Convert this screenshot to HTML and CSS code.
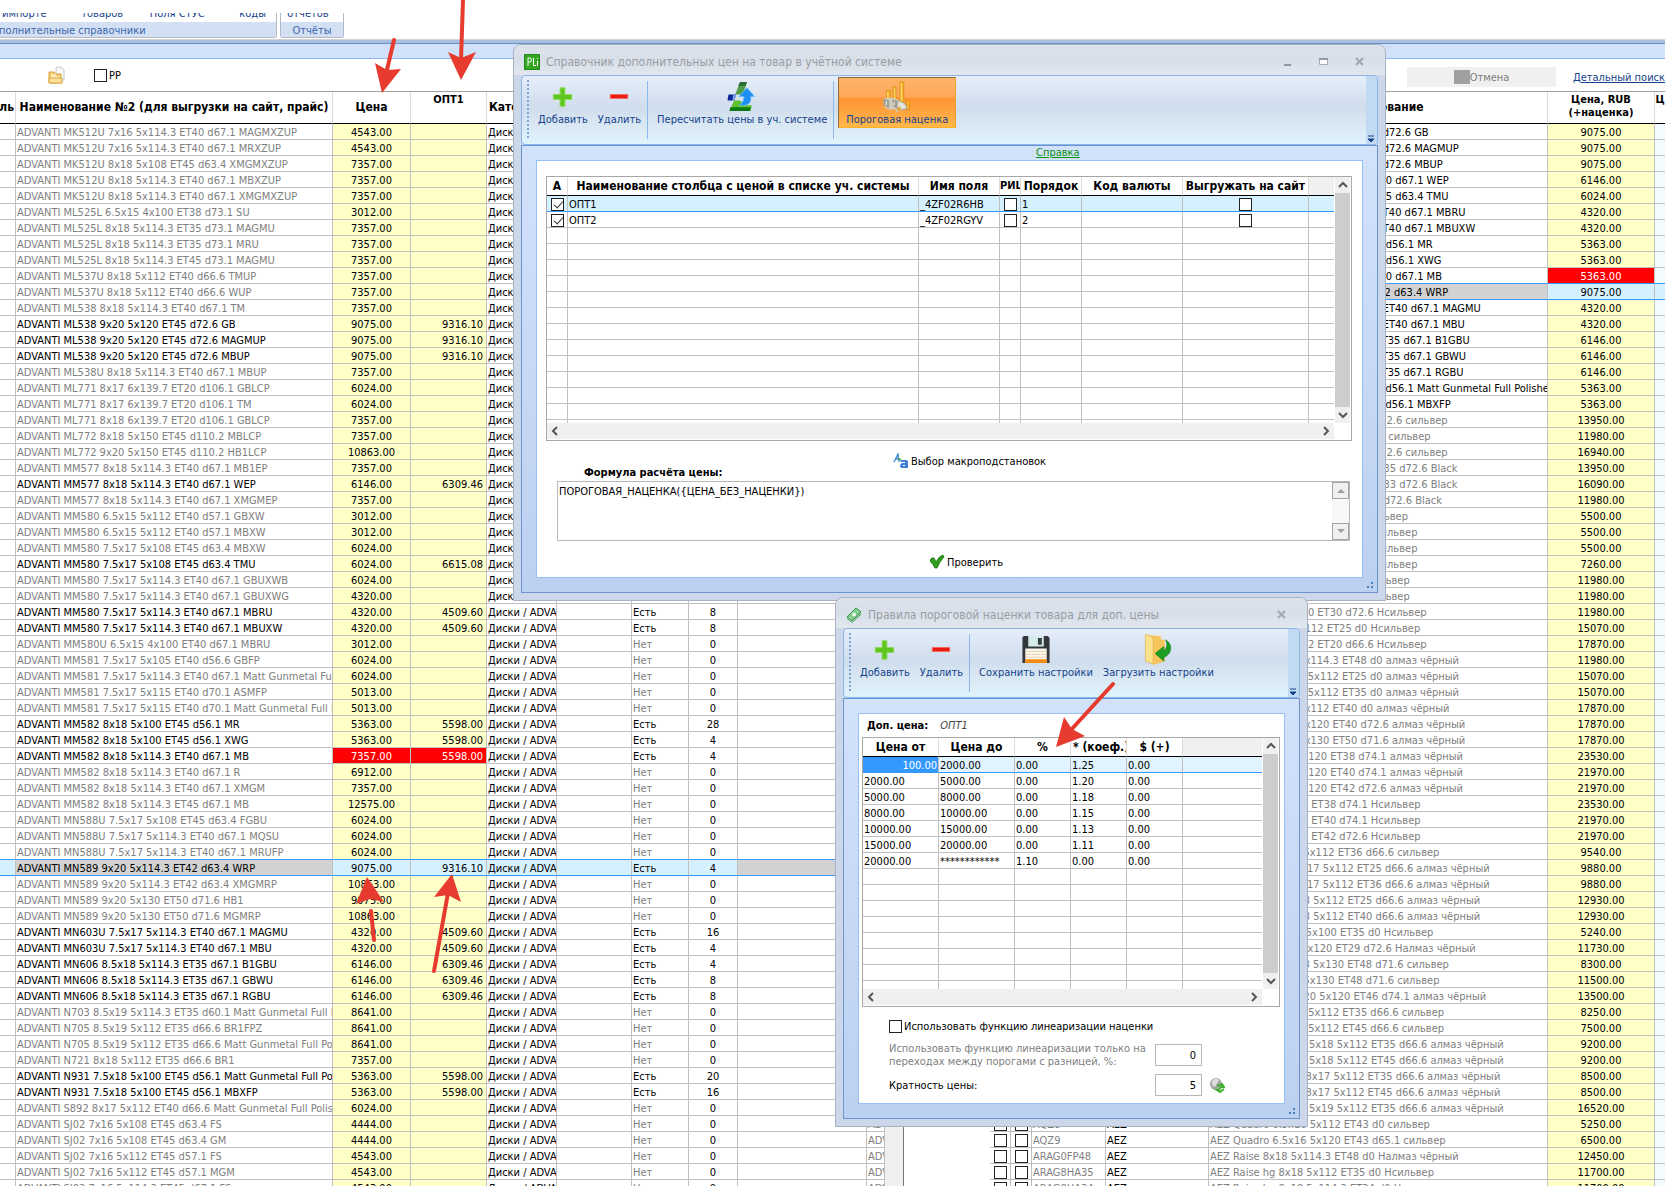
FILE: index.html
```html
<!DOCTYPE html>
<html lang="ru">
<head>
<meta charset="utf-8">
<title>Справочник дополнительных цен</title>
<link rel="stylesheet" href="styles.css">
</head>
<body>
<header class="ribbon">
  <section class="ribbon-group ribbon-group-main">
    <div class="ribbon-items">
      <button type="button">импорте ˅</button>
      <button type="button">товаров</button>
      <button type="button">Поля СТУС ˅</button>
      <button type="button">коды</button>
    </div>
    <h2>полнительные справочники</h2>
  </section>
  <section class="ribbon-group ribbon-group-reports">
    <div class="ribbon-items"><button type="button">отчётов ˅</button></div>
    <h2>Отчёты</h2>
  </section>
</header>
<div class="band"></div>
<div class="filters">
  <button type="button" class="icon-btn" aria-label="Открыть">
    <svg width="17" height="18" viewBox="0 0 17 18"><path d="M9 1h4l3 3v10H8V2z" fill="#f6f6f6" stroke="#c8c8c8"/><path d="M1 6h5l1 2h6v9H1z" fill="#f6cf6e" stroke="#d9a33a"/><path d="M3 11h9M3 9h5" stroke="#fff"/><path d="M1 17v-5h13v5z" fill="#fde39a" stroke="#d9a33a"/></svg>
  </button>
  <label class="pp"><input type="checkbox" class="box">PP</label>
  <button type="button" class="cancel" disabled><span class="stop"></span>Отмена</button>
  <a href="#" class="detail">Детальный поиск</a>
</div>
<main class="panes">
  <div class="pane-left">
    <table class="sheet left">
      <colgroup><col class="w16"><col class="w317"><col class="w78"><col class="w76"><col class="w70"><col class="w75"><col class="w57"><col class="w49"><col class="w129"><col class="w18"></colgroup>
      <thead><tr><th class="clip-left">ль</th><th>Наименование №2 (для выгрузки на сайт, прайс)</th><th>Цена</th><th class="top">ОПТ1</th><th class="start">Категория</th><th></th><th></th><th></th><th></th><th></th></tr></thead>
      <tbody id="left-rows"></tbody>
    </table>
    <div class="vbar"></div>
  </div>
  <div class="pane-right">
    <table class="sheet right">
      <colgroup><col class="w21"><col class="w21"><col class="w74"><col class="w103"><col><col class="w107"><col class="w10"></colgroup>
      <thead><tr><th></th><th></th><th></th><th></th><th>Наименование</th><th class="top">Цена, RUB<br>(+наценка)</th><th class="top">Ц</th></tr></thead>
      <tbody id="right-rows"></tbody>
    </table>
  </div>
</main>

<section class="window win-prices">
  <div class="titlebar">
    <svg width="16" height="16" viewBox="0 0 16 16"><rect width="16" height="16" fill="#1f8a1a"/><rect x="1" y="1" width="14" height="14" fill="#35a522"/><path d="M4 12V4h2q1.500 0 1.500 2T6 8H4M9.500 4v7.500H12M13.500 7v5M13.500 4v1" fill="none" stroke="#fff"/></svg>
    <h1>Справочник дополнительных цен на товар в учётной системе</h1>
    <button type="button" aria-label="Свернуть"><svg width="12" height="12" viewBox="0 0 12 12"><path d="M2 9h7" stroke="#8e99a8" stroke-width="2"/></svg></button>
    <button type="button" aria-label="Развернуть"><svg width="12" height="12" viewBox="0 0 12 12"><path d="M1.500 3h8v5.500h-8z" fill="#fff" stroke="#a3abb8"/><path d="M1 3h9" stroke="#8e99a8" stroke-width="2"/></svg></button>
    <button type="button" aria-label="Закрыть"><svg width="12" height="12" viewBox="0 0 12 12"><path d="M2 2l7 7M9 2l-7 7" stroke="#9ea8b8" stroke-width="2"/></svg></button>
  </div>
  <div class="toolbar">
    <span class="grip"></span>
    <button type="button" class="tool"><svg width="32" height="32" viewBox="0 0 32 32"><path d="M13 7h5v7h7v5h-7v7h-5v-7H6v-5h7z" fill="#5fc51f" stroke="#8ddb5a"/></svg>Добавить</button>
    <button type="button" class="tool"><svg width="32" height="32" viewBox="0 0 32 32"><path d="M7 14h18v4H7z" fill="#ea1a12" stroke="#f5685c"/></svg>Удалить</button>
    <span class="sep"></span>
    <button type="button" class="tool"><svg width="32" height="32" viewBox="0 0 32 32"><path d="M14 1h7l-4 13H9z" fill="#4f9d4a"/><path d="M14 1h7l-1 4h-8z" fill="#2d6b34"/><path d="M2 14h8l-2 6H1z" fill="#0c2a9c"/><path d="M7 14h3l-2 6H6z" fill="#7fa0ea"/><path d="M8 20h6l5 5h7l-1 6H3z" fill="#5fc22c"/><path d="M4 27h21l-1 4H3z" fill="#0d7a14"/><path d="M21 7l8 9h-4q1 7-5 9h-7q5-3 5-9h-5z" fill="#1e90f5" stroke="#66bcff" stroke-width=".8"/></svg>Пересчитать цены в уч. системе</button>
    <span class="sep"></span>
    <button type="button" class="tool active" aria-pressed="true"><svg width="32" height="32" viewBox="0 0 32 32"><g fill="#f8b62c" stroke="#d98a0e" stroke-width=".8"><path d="M5 10h4v10H5zM12 6h3v14h-3zM19 1h4v27h-4zM26 20h3v10h-3z"/></g><g fill="#fbe08a"><path d="M6 11h1v8H6zM13 7h1v12h-1zM20 2h1v18h-1z"/></g><path d="M2 18l7-1 8 2 8 6v4l-9 3-3-3-4 1-6-3z" fill="#cfccbd"/><path d="M2 18l6 2v8l-6-3zM11 19l5 1v9l-4-3z" fill="#a3a195"/><path d="M17 20l7 3 3 5-7 2-4-4z" fill="#dedbd0" stroke="#86847a" stroke-width=".6"/><path d="M5 21v4M13 22v3M19 23l4 4" stroke="#fff"/><circle cx="18" cy="29" r="2" fill="#e9a51c"/></svg>Пороговая наценка</button>
    <span class="more"><svg width="10" height="10" viewBox="0 0 10 10"><path d="M2 2h6M2 5h6L5 8z" fill="#15428b" stroke="#15428b"/></svg></span>
  </div>
  <div class="client">
    <a href="#" class="help">Справка</a>
    <div class="panel">
      <div class="grid">
        <div class="grid-view">
          <table class="sheet">
            <colgroup><col class="w21"><col><col class="w81"><col class="w21"><col class="w61"><col class="w101"><col class="w126"><col class="w25"></colgroup>
            <thead><tr><th>A</th><th>Наименование столбца с ценой в списке уч. системы</th><th>Имя поля</th><th class="small">РИЦ</th><th>Порядок</th><th>Код валюты</th><th>Выгружать на сайт</th><th class="blank"></th></tr></thead>
            <tbody id="price-rows"></tbody>
          </table>
        </div>
        <div class="vscroll"><svg viewBox="0 0 16 16"><path d="M4 10l4-4 4 4" /></svg><i></i><svg viewBox="0 0 16 16"><path d="M4 6l4 4 4-4"/></svg></div>
        <div class="hscroll"><svg viewBox="0 0 16 16"><path d="M10 4L6 8l4 4"/></svg><svg viewBox="0 0 16 16"><path d="M6 4l4 4-4 4"/></svg></div>
      </div>
      <div class="formula-head">
        <label for="formula">Формула расчёта цены:</label>
        <button type="button" class="link-btn"><svg width="16" height="16" viewBox="0 0 16 16"><path d="M1 9L5 1l1 8M2 6h4" fill="none" stroke="#4a8fe0" stroke-width="1.500"/><path d="M5 5l4 3" stroke="#3aa03a" stroke-width="1.500"/><path d="M8 7h5q2 0 2 2v6H9q-2 0-2-2t2-3h3V9H8z" fill="#3f7fd6"/><path d="M10 12h2v1h-2z" fill="#fff"/></svg>Выбор макроподстановок</button>
      </div>
      <div class="formula-box">
        <textarea id="formula">ПОРОГОВАЯ_НАЦЕНКА({ЦЕНА_БЕЗ_НАЦЕНКИ})</textarea>
        <div class="spin"><button type="button" aria-label="Вверх"><svg width="8" height="5" viewBox="0 0 8 5"><path d="M0 5l4-4 4 4z"/></svg></button><button type="button" aria-label="Вниз"><svg width="8" height="5" viewBox="0 0 8 5"><path d="M0 0l4 4 4-4z"/></svg></button></div>
      </div>
      <div class="check"><button type="button" class="link-btn"><svg width="16" height="16" viewBox="0 0 16 16"><path d="M1 7q1-4 4-3l2 4q3-6 7-7l1 2q-4 4-7 11H6Q4 10 1 7z" fill="#2f9e1c" stroke="#1c6f12" stroke-width=".8"/></svg>Проверить</button></div>
    </div>
    <svg class="resize" width="6" height="6" viewBox="0 0 6 6"><path d="M4 0h2v2H4zM4 4h2v2H4zM0 4h2v2H0z" fill="#4a7ebb"/></svg>
  </div>
</section>

<section class="window win-rules">
  <div class="titlebar">
    <svg width="16" height="16" viewBox="0 0 16 16"><path d="M1 10L10 1l5 4-9 9z" fill="#7cc98a" stroke="#3f9a55"/><path d="M1 11l5 4 9-9v2l-9 8-5-4z" fill="#5aad6a"/><circle cx="8" cy="7.500" r="2" fill="#e9f8ea"/><path d="M4 10l1 1M11 4l1 1" stroke="#e9f8ea"/></svg>
    <h1>Правила пороговой наценки товара для доп. цены</h1>
    <button type="button" aria-label="Закрыть"><svg width="12" height="12" viewBox="0 0 12 12"><path d="M2 2l7 7M9 2l-7 7" stroke="#9ea8b8" stroke-width="2"/></svg></button>
  </div>
  <div class="toolbar">
    <span class="grip"></span>
    <button type="button" class="tool"><svg width="32" height="32" viewBox="0 0 32 32"><path d="M13 7h5v7h7v5h-7v7h-5v-7H6v-5h7z" fill="#5fc51f" stroke="#8ddb5a"/></svg>Добавить</button>
    <button type="button" class="tool"><svg width="32" height="32" viewBox="0 0 32 32"><path d="M7 14h18v4H7z" fill="#ea1a12" stroke="#f5685c"/></svg>Удалить</button>
    <span class="sep"></span>
    <button type="button" class="tool"><svg width="32" height="32" viewBox="0 0 32 32"><path d="M2 4q0-2 2-2h24l2 2v26H2z" fill="#33363b"/><path d="M8 2h16v11H8z" fill="#d5ebe9"/><path d="M18 4h4v7h-4z" fill="#3a3d42"/><path d="M5 15h22v15H5z" fill="#fdf8ef"/><path d="M5 18h22M5 21h22M5 24h22" stroke="#e3cfae"/><path d="M5 26h22v4H5z" fill="#f78a10"/></svg>Сохранить настройки</button>
    <button type="button" class="tool"><svg width="32" height="32" viewBox="0 0 32 32"><path d="M3 1l16 1v4h4v22l-12 4z" fill="#f6c65c"/><path d="M3 0l8 4v27l-8-3z" fill="#fbe28c" stroke="#dda93c" stroke-width=".6"/><path d="M24 6q6 4 5 10t-7 8v4l-9-8 9-7v4q5-3 2-11z" fill="#1d9e22" stroke="#0b7a14" stroke-width=".6"/></svg>Загрузить настройки</button>
    <span class="more"><svg width="10" height="10" viewBox="0 0 10 10"><path d="M2 2h6M2 5h6L5 8z" fill="#15428b" stroke="#15428b"/></svg></span>
  </div>
  <div class="client">
    <div class="panel">
      <p class="extra"><b>Доп. цена:</b><i>ОПТ1</i></p>
      <div class="grid">
        <div class="grid-view">
          <table class="sheet">
            <colgroup><col class="w76"><col class="w76"><col class="w56"><col class="w56"><col class="w56"><col></colgroup>
            <thead><tr><th>Цена от</th><th>Цена до</th><th>%</th><th class="start">* (коеф.)</th><th>$ (+)</th><th class="blank"></th></tr></thead>
            <tbody id="rule-rows"></tbody>
          </table>
        </div>
        <div class="vscroll"><svg viewBox="0 0 16 16"><path d="M4 10l4-4 4 4" /></svg><i></i><svg viewBox="0 0 16 16"><path d="M4 6l4 4 4-4"/></svg></div>
        <div class="hscroll"><svg viewBox="0 0 16 16"><path d="M10 4L6 8l4 4"/></svg><svg viewBox="0 0 16 16"><path d="M6 4l4 4-4 4"/></svg></div>
      </div>
      <div class="options">
        <label class="linear"><input type="checkbox" class="box">Использовать функцию линеаризации наценки</label>
        <div class="field"><label for="diff" class="dim">Использовать функцию линеаризации только на переходах между порогами с разницей, %:</label><input id="diff" type="text" value="0"></div>
        <div class="field"><label for="mult">Кратность цены:</label><input id="mult" type="text" value="5"><svg width="16" height="16" viewBox="0 0 16 16"><circle cx="7" cy="7" r="6" fill="#a6a6a6"/><path d="M3 4q3-4 7-1l-4 7q-4-2-3-6z" fill="#dedede"/><path d="M8 9l5-2 2 3h-3l-1 2M15 12l-4 3-3-2h3" fill="none" stroke="#3faf2c" stroke-width="2"/></svg></div>
      </div>
    </div>
    <svg class="resize" width="6" height="6" viewBox="0 0 6 6"><path d="M4 0h2v2H4zM4 4h2v2H4zM0 4h2v2H0z" fill="#4a7ebb"/></svg>
  </div>
</section>

<svg class="arrows" width="1200" height="1000" viewBox="0 0 1200 1000">
  <g stroke="#e63b2e" stroke-width="4" stroke-linecap="round"><path d="M394 40L386 74M463 0L461 60M371 911L374 940M434 971L448 893M1113 684L1070 731"/></g>
  <g fill="#e63b2e"><path d="M382 93L375 63L387 70L401 69zM461 80L448 52L461 58L476 52zM367 877L384 902L370 899L356 904zM452 874L461 902L448 895L434 897zM1056 747L1064 717L1072 729L1085 736z"/></g>
</svg>
<script src="rows.js"></script>
</body>
</html>
```
FILE: styles.css
```css
* { box-sizing: border-box; }
body {
  margin: 0;
  height: 100vh;
  overflow: hidden;
  position: relative;
  display: flex;
  flex-direction: column;
  background: #fff;
  color: #000;
  font: 11px/15px "DejaVu Sans Condensed", "Noto Sans", sans-serif;
}
button { font: inherit; color: inherit; background: none; border: 0; padding: 0; margin: 0; }
h1, h2, p { margin: 0; font-size: 11px; font-weight: normal; }

.ribbon { flex: none; height: 40px; padding-top: 13px; display: flex; gap: 3px; border-bottom: 1px solid #d4d4d4; }
.ribbon-group { height: 25px; border: 1px solid #b4bac4; border-top: 0; border-radius: 0 0 3px 3px; color: #3c66ad; overflow: hidden; }
.ribbon-group-main { width: 277px; border-left: 0; border-bottom-left-radius: 0; }
.ribbon-group-reports { width: 64px; }
.ribbon-group h2 { height: 16px; line-height: 17px; background: #d3e0f4; white-space: nowrap; }
.ribbon-group-main h2 { text-indent: -1px; }
.ribbon-group-reports h2 { text-align: center; }
.ribbon-items { height: 9px; display: flex; align-items: flex-end; overflow: hidden; color: #15428b; white-space: nowrap; }
.ribbon-items button { line-height: 15px; height: 17px; }
.ribbon-group-main .ribbon-items { padding: 0 10px 0 2px; justify-content: space-between; }
.ribbon-group-reports .ribbon-items { justify-content: center; }

.band { flex: none; height: 19px; background: #d2e1fa; border-top: 3px solid #a9bfe0; border-bottom: 1px solid #8fb8f0; box-shadow: inset 0 1px #6890c8; }

.filters { flex: none; height: 33px; display: flex; align-items: center; padding-left: 47px; border-bottom: 1px solid #a0a0a0; }
.icon-btn { width: 18px; height: 18px; margin-right: 29px; }
.pp { display: flex; align-items: center; gap: 2px; }
.box { appearance: none; width: 13px; height: 13px; margin: 0; border: 1px solid #222; background: #fff; flex: none; }
.box:checked { position: relative; }
.box:checked::after { content: ""; position: absolute; left: 4px; top: 0; width: 4px; height: 8px; border: solid #333; border-width: 0 1px 1px 0; transform: rotate(42deg); }
.cancel { margin: 4px 0 0 auto; width: 149px; height: 20px; background: #f0f0f0; color: #7d7d7d; display: flex; align-items: center; justify-content: center; }
.stop { width: 16px; height: 14px; background: #a0a0a0; }
.detail { margin: 4px 0 0 17px; color: #15428b; }

.panes { flex: 1; min-height: 0; display: flex; overflow: hidden; }
.pane-left { display: flex; flex: none; width: 904px; margin-right: 86px; border-right: 1px solid #777; }
.pane-right { flex: 1; min-width: 560px; }
.vbar { width: 18px; background: #f0f0f0; }

.sheet { table-layout: fixed; border-collapse: separate; border-spacing: 0; width: 100%; }
.left { width: 885px; }
.w10 { width: 10px; } .w16 { width: 16px; } .w18 { width: 18px; } .w21 { width: 21px; } .w25 { width: 25px; }
.w49 { width: 49px; } .w56 { width: 56px; } .w57 { width: 57px; } .w61 { width: 61px; } .w70 { width: 70px; }
.w74 { width: 74px; } .w75 { width: 75px; } .w76 { width: 76px; } .w78 { width: 78px; } .w81 { width: 81px; }
.w101 { width: 101px; } .w103 { width: 103px; } .w107 { width: 107px; } .w126 { width: 126px; } .w129 { width: 129px; }
.w317 { width: 317px; }
.sheet th { height: 32px; padding: 0; font-size: 12px; line-height: 13px; border-right: 1px solid #dcdcdc; border-bottom: 1px solid #000; white-space: nowrap; overflow: hidden; }
.sheet th.top { vertical-align: top; font-size: 11px; padding-top: 1px; }
.sheet th.start { text-align: left; padding-left: 2px; }
.sheet th.small { font-size: 11px; }
.sheet th.blank { background: #f0f0f0; }
.sheet th.clip-left { direction: rtl; padding-right: 2px; }
.sheet td { height: 16px; padding: 2px 1px 0; line-height: 13px; border-right: 1px solid #c0c0c0; border-bottom: 1px solid #c0c0c0; white-space: nowrap; overflow: hidden; }
.sheet .c { text-align: center; }
.sheet .r { text-align: right; padding-right: 3px; }
.sheet .price { background: #ffffc8; text-align: center; }
.sheet .opt { background: #ffffc8; text-align: right; padding-right: 3px; }
.sheet .alarm { background: #f00; color: #fff; }
.sheet .gray { color: #808080; }
.sheet .pale { background: #f4fcff; }
.sheet .tick { padding: 1px 1px 0; }
.sheet .box { display: block; margin: 0 auto; }
.sheet .current td { background: #d5f0ff; border-bottom-color: #3399ff; }
.sheet .before td { border-bottom-color: #3399ff; }
.sheet .current .mark { background: #d2d2d2; }
.right th:last-child, .right td:last-child { border-right: 0; }

.window { position: absolute; padding: 0 7px 7px; background: #ccd8ea; border: 1px solid #a6b1c2; border-radius: 8px 8px 0 0; }
.win-prices { left: 513px; top: 44px; width: 873px; }
.win-rules { left: 835px; top: 597px; width: 473px; }
.titlebar { height: 30px; margin: 0 -7px; padding: 4px 10px 0; display: flex; align-items: center; gap: 6px; background: linear-gradient(#dde3eb, #d8dfe9 50%, #e2e7ee); border-radius: 7px 7px 0 0; color: #999da3; }
.titlebar h1 { flex: 1; font-size: 12px; }
.titlebar button { width: 30px; height: 16px; display: flex; align-items: center; justify-content: center; }
.toolbar { height: 70px; padding-top: 1px; display: flex; align-items: flex-start; border: 1px solid #8ab4ea; border-radius: 4px; background: linear-gradient(#e6eefa, #cfdcec 48%, #d6e3f0 60%, #dff3fb); color: #15428b; overflow: hidden; }
.grip { width: 2px; height: 60px; margin: 3px 4px 0 5px; background: repeating-linear-gradient(#7fa3db 0 2px, transparent 2px 4px); }
.tool { height: 51px; padding: 3px 4px 0; border: 1px solid transparent; display: flex; flex-direction: column; align-items: center; gap: 1px; white-space: nowrap; line-height: 14px; }
.tool svg { display: block; }
.tool.active { padding: 3px 7px 0; border-color: #8f6c3c #f0a030 #ffb020 #8f6c3c; background: linear-gradient(#fdb468, #ffa85a 38%, #ff9336 42%, #ffb84c); }
.sep { width: 1px; height: 58px; margin: 4px 4px 0 1px; background: #8ab9f2; }
.more { width: 11px; margin: -1px 0 0 auto; align-self: stretch; background: #c2d9f2; display: flex; align-items: flex-end; }
.client { position: relative; border: 1px solid #6a95d2; background: linear-gradient(#d3e2fb, #bcd0f0); padding: 14px; }
.help { position: absolute; left: 514px; top: 0; color: #0a9010; line-height: 14px; }
.panel { background: #fff; border: 1px solid #98c0f4; }
.resize { position: absolute; right: 4px; bottom: 4px; }
.win-prices .panel { padding: 15px 10px 7px 9px; }
.grid { display: grid; grid-template-columns: 1fr 17px; border: 1px solid #a8a8a8; padding-bottom: 1px; }
.grid-view { overflow: hidden; height: 246px; }
.grid .sheet th { height: 19px; line-height: 16px; }
.grid .sheet td:last-child, .grid .sheet th:last-child { border-right: 0; }
.grid .sheet .picked { background: #3399ff; color: #fff; text-align: right; }
.vscroll { display: flex; flex-direction: column; margin: 0 0 0 1px; background: #f0f0f0; width: 15px; }
.vscroll i { flex: 1; background: #cdcdcd; }
.hscroll { grid-column: 1; height: 16px; display: flex; justify-content: space-between; background: #f0f0f0; }
.vscroll svg, .hscroll svg { width: 16px; height: 16px; fill: none; stroke: #555; stroke-width: 2; }
.formula-head { height: 40px; display: grid; grid-template-columns: 347px auto; padding-top: 12px; }
.formula-head label { font-weight: bold; align-self: end; padding: 0 0 1px 38px; }
.link-btn { display: flex; align-items: center; gap: 2px; height: 16px; }
.formula-box { display: flex; margin: 0 2px 0 11px; height: 60px; border: 1px solid #b8b8b8; }
textarea { flex: 1; border: 0; resize: none; outline: 0; padding: 2px 1px; font: inherit; overflow: hidden; }
.spin { width: 17px; display: flex; flex-direction: column; justify-content: space-between; background: #f7f7f7; }
.spin button { height: 17px; border: 1px solid #a5a5a5; background: #f0f0f0; display: flex; align-items: center; justify-content: center; }
.spin svg { fill: #a0a0a0; }
.check { display: flex; justify-content: center; padding: 13px 0 0 34px; }

.win-rules .panel { padding: 0 4px 7px 3px; }
.extra { height: 23px; display: flex; align-items: center; gap: 12px; padding-left: 5px; }
.extra i { color: #444; }
.win-rules .grid-view { height: 251px; }
.win-rules .grid .current td { background: #e0f3ff; }
.win-rules .grid .current .picked { background: #3399ff; }
.options { padding: 12px 0 0 27px; }
.linear { display: flex; align-items: center; gap: 2px; height: 15px; }
.field { display: flex; align-items: center; height: 22px; margin-top: 8px; }
.linear + .field { margin-top: 10px; }
.field label { width: 266px; line-height: 13px; }
.field .dim { color: #808080; padding-right: 6px; }
.field input { width: 47px; height: 22px; border: 1px solid #b8b8b8; text-align: right; font: inherit; padding: 0 5px; }
.field svg { margin-left: 7px; }

.arrows { position: absolute; left: 0; top: 0; pointer-events: none; }
```
FILE: rows.js
```js
// name | price | extra price | stock
const left = `ADVANTI MK512U 7x16 5x114.3 ET40 d67.1 MAGMXZUP|4543.00||0
ADVANTI MK512U 7x16 5x114.3 ET40 d67.1 MRXZUP|4543.00||0
ADVANTI MK512U 8x18 5x108 ET45 d63.4 XMGMXZUP|7357.00||0
ADVANTI MK512U 8x18 5x114.3 ET40 d67.1 MBXZUP|7357.00||0
ADVANTI MK512U 8x18 5x114.3 ET40 d67.1 XMGMXZUP|7357.00||0
ADVANTI ML525L 6.5x15 4x100 ET38 d73.1 SU|3012.00||0
ADVANTI ML525L 8x18 5x114.3 ET35 d73.1 MAGMU|7357.00||0
ADVANTI ML525L 8x18 5x114.3 ET35 d73.1 MRU|7357.00||0
ADVANTI ML525L 8x18 5x114.3 ET45 d73.1 MAGMU|7357.00||0
ADVANTI ML537U 8x18 5x112 ET40 d66.6 TMUP|7357.00||0
ADVANTI ML537U 8x18 5x112 ET40 d66.6 WUP|7357.00||0
ADVANTI ML538 8x18 5x114.3 ET40 d67.1 TM|7357.00||0
ADVANTI ML538 9x20 5x120 ET45 d72.6 GB|9075.00|9316.10|4
ADVANTI ML538 9x20 5x120 ET45 d72.6 MAGMUP|9075.00|9316.10|4
ADVANTI ML538 9x20 5x120 ET45 d72.6 MBUP|9075.00|9316.10|4
ADVANTI ML538U 8x18 5x114.3 ET40 d67.1 MBUP|7357.00||0
ADVANTI ML771 8x17 6x139.7 ET20 d106.1 GBLCP|6024.00||0
ADVANTI ML771 8x17 6x139.7 ET20 d106.1 TM|6024.00||0
ADVANTI ML771 8x18 6x139.7 ET20 d106.1 GBLCP|7357.00||0
ADVANTI ML772 8x18 5x150 ET45 d110.2 MBLCP|7357.00||0
ADVANTI ML772 9x20 5x150 ET45 d110.2 HB1LCP|10863.00||0
ADVANTI MM577 8x18 5x114.3 ET40 d67.1 MB1EP|7357.00||0
ADVANTI MM577 8x18 5x114.3 ET40 d67.1 WEP|6146.00|6309.46|8
ADVANTI MM577 8x18 5x114.3 ET40 d67.1 XMGMEP|7357.00||0
ADVANTI MM580 6.5x15 5x112 ET40 d57.1 GBXW|3012.00||0
ADVANTI MM580 6.5x15 5x112 ET40 d57.1 MBXW|3012.00||0
ADVANTI MM580 7.5x17 5x108 ET45 d63.4 MBXW|6024.00||0
ADVANTI MM580 7.5x17 5x108 ET45 d63.4 TMU|6024.00|6615.08|4
ADVANTI MM580 7.5x17 5x114.3 ET40 d67.1 GBUXWB|6024.00||0
ADVANTI MM580 7.5x17 5x114.3 ET40 d67.1 GBUXWG|4320.00||0
ADVANTI MM580 7.5x17 5x114.3 ET40 d67.1 MBRU|4320.00|4509.60|8
ADVANTI MM580 7.5x17 5x114.3 ET40 d67.1 MBUXW|4320.00|4509.60|8
ADVANTI MM580U 6.5x15 4x100 ET40 d67.1 MBRU|3012.00||0
ADVANTI MM581 7.5x17 5x105 ET40 d56.6 GBFP|6024.00||0
ADVANTI MM581 7.5x17 5x114.3 ET40 d67.1 Matt Gunmetal Full Polished|6024.00||0
ADVANTI MM581 7.5x17 5x115 ET40 d70.1 ASMFP|5013.00||0
ADVANTI MM581 7.5x17 5x115 ET40 d70.1 Matt Gunmetal Full Polished|5013.00||0
ADVANTI MM582 8x18 5x100 ET45 d56.1 MR|5363.00|5598.00|28
ADVANTI MM582 8x18 5x100 ET45 d56.1 XWG|5363.00|5598.00|4
ADVANTI MM582 8x18 5x114.3 ET40 d67.1 MB|7357.00|5598.00|4
ADVANTI MM582 8x18 5x114.3 ET40 d67.1 R|6912.00||0
ADVANTI MM582 8x18 5x114.3 ET40 d67.1 XMGM|7357.00||0
ADVANTI MM582 8x18 5x114.3 ET45 d67.1 MB|12575.00||0
ADVANTI MN588U 7.5x17 5x108 ET45 d63.4 FGBU|6024.00||0
ADVANTI MN588U 7.5x17 5x114.3 ET40 d67.1 MQSU|6024.00||0
ADVANTI MN588U 7.5x17 5x114.3 ET40 d67.1 MRUFP|6024.00||0
ADVANTI MN589 9x20 5x114.3 ET42 d63.4 WRP|9075.00|9316.10|4
ADVANTI MN589 9x20 5x114.3 ET42 d63.4 XMGMRP|10863.00||0
ADVANTI MN589 9x20 5x130 ET50 d71.6 HB1|9075.00||0
ADVANTI MN589 9x20 5x130 ET50 d71.6 MGMRP|10863.00||0
ADVANTI MN603U 7.5x17 5x114.3 ET40 d67.1 MAGMU|4320.00|4509.60|16
ADVANTI MN603U 7.5x17 5x114.3 ET40 d67.1 MBU|4320.00|4509.60|4
ADVANTI MN606 8.5x18 5x114.3 ET35 d67.1 B1GBU|6146.00|6309.46|4
ADVANTI MN606 8.5x18 5x114.3 ET35 d67.1 GBWU|6146.00|6309.46|8
ADVANTI MN606 8.5x18 5x114.3 ET35 d67.1 RGBU|6146.00|6309.46|8
ADVANTI N703 8.5x19 5x114.3 ET35 d60.1 Matt Gunmetal Full Polished|8641.00||0
ADVANTI N705 8.5x19 5x112 ET35 d66.6 BR1FPZ|8641.00||0
ADVANTI N705 8.5x19 5x112 ET35 d66.6 Matt Gunmetal Full Polished|8641.00||0
ADVANTI N721 8x18 5x112 ET35 d66.6 BR1|7357.00||0
ADVANTI N931 7.5x18 5x100 ET45 d56.1 Matt Gunmetal Full Polished|5363.00|5598.00|20
ADVANTI N931 7.5x18 5x100 ET45 d56.1 MBXFP|5363.00|5598.00|16
ADVANTI S892 8x17 5x112 ET40 d66.6 Matt Gunmetal Full Polished|6024.00||0
ADVANTI SJ02 7x16 5x108 ET45 d63.4 FS|4444.00||0
ADVANTI SJ02 7x16 5x108 ET45 d63.4 GM|4444.00||0
ADVANTI SJ02 7x16 5x112 ET45 d57.1 FS|4543.00||0
ADVANTI SJ02 7x16 5x112 ET45 d57.1 MGM|4543.00||0
ADVANTI SJ02 7x16 5x114.3 ET45 d67.1 FS|4543.00||0`;

// name | price | code
const right = `ADVANTI ML538 9x20 5x120 ET45 d72.6 GB|9075.00
ADVANTI ML538 9x20 5x120 ET45 d72.6 MAGMUP|9075.00
ADVANTI ML538 9x20 5x120 ET45 d72.6 MBUP|9075.00
ADVANTI MM577 8x18 5x114.3 ET40 d67.1 WEP|6146.00
ADVANTI MM580 7.5x17 5x108 ET45 d63.4 TMU|6024.00
ADVANTI MM580 7.5x17 5x114.3 ET40 d67.1 MBRU|4320.00
ADVANTI MM580 7.5x17 5x114.3 ET40 d67.1 MBUXW|4320.00
ADVANTI MM582 8x18 5x100 ET45 d56.1 MR|5363.00
ADVANTI MM582 8x18 5x100 ET45 d56.1 XWG|5363.00
ADVANTI MM582 8x18 5x114.3 ET40 d67.1 MB|5363.00
ADVANTI MN589 9x20 5x114.3 ET42 d63.4 WRP|9075.00
ADVANTI MN603U 7.5x17 5x114.3 ET40 d67.1 MAGMU|4320.00
ADVANTI MN603U 7.5x17 5x114.3 ET40 d67.1 MBU|4320.00
ADVANTI MN606 8.5x18 5x114.3 ET35 d67.1 B1GBU|6146.00
ADVANTI MN606 8.5x18 5x114.3 ET35 d67.1 GBWU|6146.00
ADVANTI MN606 8.5x18 5x114.3 ET35 d67.1 RGBU|6146.00
ADVANTI N931 7.5x18 5x100 ET45 d56.1 Matt Gunmetal Full Polished|5363.00
ADVANTI N931 7.5x18 5x100 ET45 d56.1 MBXFP|5363.00
AEZ Antigua 8.5x18 5x112 ET35 d72.6 сильвер|13950.00
AEZ Tidore 8x17 5x112 ET35 d66.6 сильвер|11980.00
AEZ Antigua 9.5x19 5x120 ET35 d72.6 сильвер|16940.00
AEZ Antigua dark 8.5x18 5x120 ET35 d72.6 Black|13950.00
AEZ Antigua dark 9.5x19 5x120 ET33 d72.6 Black|16090.00
AEZ Antigua drk 8x17 5x120 ET30 d72.6 Black|11980.00
AEZ Ixion 7x16 5x112 ET35 d0 сильвер|5500.00
AEZ Ixion 7x16 5x114.3 ET40 d0 сильвер|5500.00
AEZ Ixion 7x16 5x114.3 ET48 d0 сильвер|5500.00
AEZ Ixion 8x17 5x114.3 ET40 d0 сильвер|7260.00
AEZ Ace 8x18 5x112 ET48 d0 Нсильвер|11980.00
AEZ Ace 8x18 5x114 ET35 d0 Нсильвер|11980.00
AEZ Cliff 8x18 5x120 ET30 d72.6 Нсильвер|11980.00
AEZ Cliff 8.5x19 5x112 ET25 d0 Нсильвер|15070.00
AEZ Cliff 9x20 5x112 ET20 d66.6 Нсильвер|17870.00
AEZ Cliff dk 8x18 5x114.3 ET48 d0 алмаз чёрный|11980.00
AEZ Cliff dk 8.5x19 5x112 ET25 d0 алмаз чёрный|15070.00
AEZ Cliff dk 8.5x19 5x112 ET35 d0 алмаз чёрный|15070.00
AEZ Cliff dk 9x20 5x112 ET40 d0 алмаз чёрный|17870.00
AEZ Cliff dk 9x20 5x120 ET40 d72.6 алмаз чёрный|17870.00
AEZ Cliff dk 9x20 5x130 ET50 d71.6 алмаз чёрный|17870.00
AEZ Crest 11x20 5x120 ET38 d74.1 алмаз чёрный|23530.00
AEZ Crest 10x20 5x120 ET40 d74.1 алмаз чёрный|21970.00
AEZ Crest 10x20 5x120 ET42 d72.6 алмаз чёрный|21970.00
AEZ C 11x20 5x120 ET38 d74.1 Нсильвер|23530.00
AEZ C 10x20 5x120 ET40 d74.1 Нсильвер|21970.00
AEZ C 10x20 5x120 ET42 d72.6 Нсильвер|21970.00
AEZ Excite 7.5x17 5x112 ET36 d66.6 сильвер|9540.00
AEZ Excite drk 7.5x17 5x112 ET25 d66.6 алмаз чёрный|9880.00
AEZ Excite drk 7.5x17 5x112 ET36 d66.6 алмаз чёрный|9880.00
AEZ Excite drk 8x18 5x112 ET25 d66.6 алмаз чёрный|12930.00
AEZ Excite drk 8x18 5x112 ET40 d66.6 алмаз чёрный|12930.00
AEZ Genua 6.5x15 5x100 ET35 d0 Нсильвер|5240.00
AEZ Lasc dk 8x18 5x120 ET29 d72.6 Налмаз чёрный|11730.00
AEZ Panama 8.5x18 5x130 ET48 d71.6 сильвер|8300.00
AEZ Panama 9x20 5x130 ET48 d71.6 сильвер|11500.00
AEZ Panama d 10x20 5x120 ET46 d74.1 алмаз чёрный|13500.00
AEZ Portofino 8x18 5x112 ET35 d66.6 сильвер|8250.00
AEZ Portofino 8x17 5x112 ET45 d66.6 сильвер|7500.00
AEZ Portofino drk 8.5x18 5x112 ET35 d66.6 алмаз чёрный|9200.00
AEZ Portofino drk 8.5x18 5x112 ET45 d66.6 алмаз чёрный|9200.00
AEZ Portofino dark 8x17 5x112 ET35 d66.6 алмаз чёрный|8500.00
AEZ Portofino dark 8x17 5x112 ET45 d66.6 алмаз чёрный|8500.00
AEZ Portofino drk 9.5x19 5x112 ET35 d66.6 алмаз чёрный|16520.00
AEZ Quadro 6.5x16 5x112 ET43 d0 сильвер|5250.00|AQZ8
AEZ Quadro 6.5x16 5x120 ET43 d65.1 сильвер|6500.00|AQZ9
AEZ Raise 8x18 5x114.3 ET48 d0 Налмаз чёрный|12450.00|ARAG0FP48
AEZ Raise hg 8x18 5x112 ET35 d0 Нсильвер|11700.00|ARAG8HA35
AEZ Raise hg 8x18 5x114.3 ET34 d0 Нсильвер|11700.00|ARAG8HA34`;

const box = (on) => `<input type="checkbox" class="box" aria-label="Отметить"${on ? " checked" : ""}>`;
const rowClass = (i, cur) => (i === cur ? "current" : i === cur - 1 ? "before" : "");
const fill = (id, html) => { document.getElementById(id).innerHTML = html; };

fill("left-rows", left.split("\n").map((line, i) => {
  const [name, price, opt, qty] = line.split("|");
  const g = qty === "0" ? "gray" : "";
  const a = i === 39 ? " alarm" : "";
  return `<tr class="${rowClass(i, 46)}"><td></td><td class="mark ${g}">${name}</td><td class="price${a}">${price}</td><td class="opt${a}">${opt}</td><td>Диски / ADVANTI</td><td></td><td class="${g}">${g ? "Нет" : "Есть"}</td><td class="c">${qty}</td><td class="mark"></td><td class="gray">ADVANTI</td></tr>`;
}).join(""));

fill("right-rows", right.split("\n").map((line, i) => {
  const [name, price, code = ""] = line.split("|");
  const g = i > 17 ? "gray" : "";
  const a = i === 9 ? " alarm" : "";
  return `<tr class="${rowClass(i, 10)}"><td class="tick">${box()}</td><td class="tick">${box()}</td><td class="gray">${code}</td><td>${i > 17 ? "AEZ" : "ADVANTI"}</td><td class="mark ${g}">${name}</td><td class="price${a}">${price}</td><td class="pale"></td></tr>`;
}).join(""));

const blank = (rows, cols) => `<tr>${"<td></td>".repeat(cols)}</tr>`.repeat(rows);

fill("price-rows", [["ОПТ1", "_4ZF02R6HB", 1], ["ОПТ2", "_4ZF02RGYV", 2]].map(([n, f, o], i) =>
  `<tr class="${i ? "" : "current"}"><td class="tick">${box(true)}</td><td>${n}</td><td>${f}</td><td class="tick">${box()}</td><td>${o}</td><td></td><td class="tick">${box()}</td><td></td></tr>`
).join("") + blank(13, 8));

fill("rule-rows", [
  ["100.00", "2000.00", "0.00", "1.25", "0.00"],
  ["2000.00", "5000.00", "0.00", "1.20", "0.00"],
  ["5000.00", "8000.00", "0.00", "1.18", "0.00"],
  ["8000.00", "10000.00", "0.00", "1.15", "0.00"],
  ["10000.00", "15000.00", "0.00", "1.13", "0.00"],
  ["15000.00", "20000.00", "0.00", "1.11", "0.00"],
  ["20000.00", "************", "1.10", "0.00", "0.00"],
].map((r, i) => `<tr class="${i ? "" : "current"}">${r.map((v, j) => `<td class="${i || j ? "" : "picked"}">${v}</td>`).join("")}<td></td></tr>`).join("") + blank(8, 6));
```
